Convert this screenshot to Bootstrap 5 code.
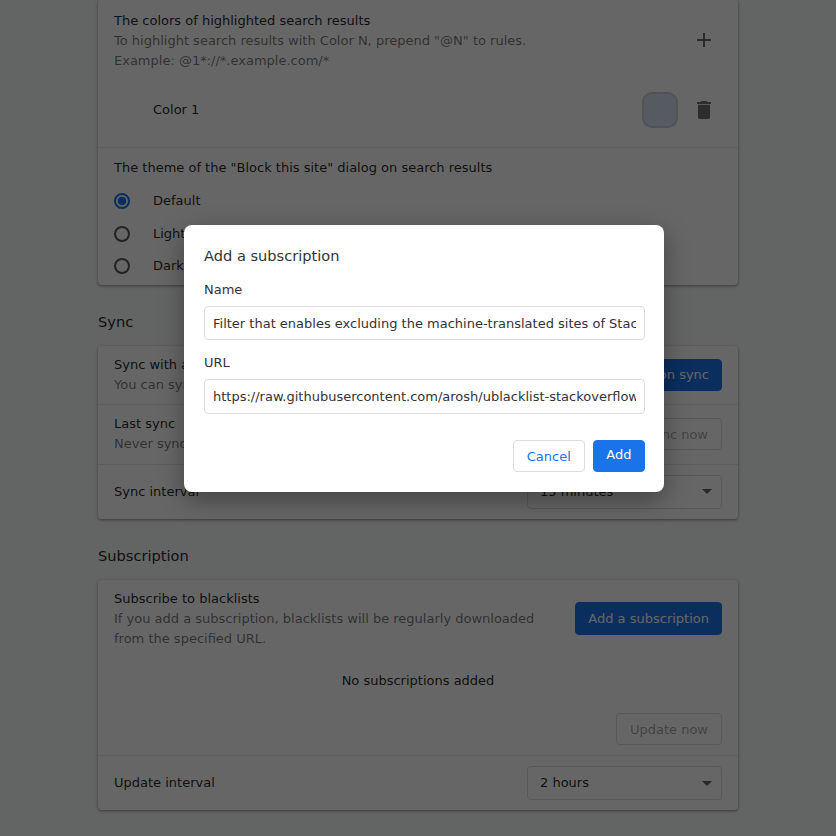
<!DOCTYPE html>
<html lang="en">
<head>
  <meta charset="UTF-8" />
  <meta name="viewport" content="width=device-width, initial-scale=1.0"/>
  <title>uBlacklist Options</title>
  <link href="https://cdn.jsdelivr.net/npm/bootstrap@5.3.0/dist/css/bootstrap.min.css" rel="stylesheet" />
  <style>
    html, body {
      height: 836px;
      overflow: hidden;
    }

    body {
      background-color: #f8f9fa;
      color: rgba(0, 0, 0, 0.87);
      font-family: "DejaVu Sans", sans-serif;
      font-size: 13px;
      line-height: 20px;
    }

    .page-wrap {
      width: 640px;
      margin-left: 98px;
      margin-top: -1px;
    }

    .section-title {
      font-size: 14.6px;
      line-height: 20px;
      margin: 27px 0 14px;
      font-weight: 400;
    }

    .set-card {
      border: 0;
      border-radius: 4px;
      box-shadow: 0 1px 3px rgba(0, 0, 0, 0.45);
      background-color: #fff;
    }

    .set-row {
      padding: 10px 16px;
      border-top: 1px solid #e8e9eb;
    }

    .set-row:first-child {
      border-top: 0;
    }

    .sub-text {
      color: rgba(0, 0, 0, 0.54);
    }

    .btn-main, .btn-line {
      font-size: 13px;
      line-height: 20px;
      border-radius: 4px;
    }

    .btn-main {
      padding: 5px 12px;
      background-color: #1a73e8;
      border: 1px solid #1a73e8;
      color: #fff;
    }

    .btn-line {
      padding: 6px 13px 4px;
      background-color: #fff;
      border: 1px solid #dadce0;
      color: #1a73e8;
    }

    .btn-line:disabled {
      background-color: #fff;
      border-color: #dadce0;
      color: rgba(0, 0, 0, 0.38);
      opacity: 1;
    }

    .btn-main.tall-btn {
      padding-top: 5.5px;
      padding-bottom: 5.5px;
    }

    .btn-main.dialog-add {
      padding: 4px 12.5px 6px;
    }

    .pick-select {
      width: 195px;
      height: 34px;
      font-size: 13px;
      line-height: 20px;
      padding: 6px 12px;
      color: rgba(0, 0, 0, 0.87);
      border-color: #dadce0;
      border-radius: 4px;
      background-size: 10px 5px;
      background-position: right 9px center;
      background-image: url("data:image/svg+xml,%3Csvg xmlns='http://www.w3.org/2000/svg' viewBox='0 0 10 5'%3E%3Cpath d='M0 0h10L5 5z' fill='%23666'/%3E%3C/svg%3E");
    }

    .first-row {
      padding-top: 12px;
      padding-bottom: 0;
    }

    .theme-row {
      padding-bottom: 2px;
    }

    .color-line {
      height: 74px;
      margin-top: 2px;
    }

    .color-name {
      padding-left: 39px;
    }

    .opt-line {
      display: flex;
      align-items: center;
      height: 32.5px;
    }

    .opt-line .form-check-input {
      width: 16px;
      height: 16px;
      margin: 0 23px 0 0;
      border: 2px solid rgba(0, 0, 0, 0.66);
      background-color: transparent;
      background-image: none;
      flex: none;
    }

    .opt-line .form-check-input:checked {
      border-color: #1a73e8;
      background-color: transparent;
      background-image: radial-gradient(circle, #1a73e8 0, #1a73e8 4px, transparent 4.6px);
    }

    .theme-head {
      margin-bottom: 7px;
    }

    .swatch {
      width: 36px;
      height: 36px;
      border-radius: 10px;
      background-color: #d6e3f5;
      border: 2px solid #c8ced6;
      margin-right: 16px;
    }

    .icon-box {
      width: 20px;
      flex: none;
      margin-right: 8px;
      line-height: 0;
    }

    .plus-box {
      margin-bottom: 2px;
    }

    .sync-a {
      height: 58px;
    }

    .sync-b {
      height: 60px;
    }

    .sub-row {
      padding-top: 9px;
    }

    .sub-copy {
      width: 440px;
    }

    .empty-note {
      margin-top: 22px;
      margin-bottom: 22.5px;
    }

    .dim-layer {
      position: absolute;
      inset: 0;
      background-color: rgba(0, 0, 0, 0.6);
      z-index: 10;
    }

    .sub-dialog {
      position: absolute;
      left: 184px;
      top: 225px;
      width: 480px;
      height: 267px;
      z-index: 11;
      padding: 20px 19px 20px 20px;
      border: 0;
      border-radius: 8px;
      background-color: #fff;
      color: #333;
      box-shadow: 0 8px 24px rgba(0, 0, 0, 0.35);
    }

    .dialog-title {
      font-size: 14.6px;
      line-height: 22px;
      font-weight: 400;
      margin: 0 0 13px;
    }

    .field-label {
      display: block;
      line-height: 20px;
      margin: 0 0 6px;
    }

    .field-input {
      height: 34px;
      font-size: 13px;
      line-height: 20px;
      padding: 6px 8px;
      color: #333;
      border-color: #dadce0;
      border-radius: 4px;
    }

    .field-gap {
      margin-bottom: 13px;
    }

    .field-input.tall {
      height: 35px;
    }
  </style>
</head>
<body>
  <div class="page-wrap">
    <div class="card set-card">
      <div class="set-row first-row">
        <div class="d-flex align-items-center justify-content-between">
          <div>
            <div>The colors of highlighted search results</div>
            <div class="sub-text">To highlight search results with Color N, prepend "@N" to rules.</div>
            <div class="sub-text">Example: @1*://*.example.com/*</div>
          </div>
          <div class="icon-box plus-box">
            <svg width="20" height="20" viewBox="0 0 20 20"><path d="M9 3h2v6h6v2h-6v6H9v-6H3V9h6z" fill="#717171"/></svg>
          </div>
        </div>
        <div class="d-flex align-items-center justify-content-between color-line">
          <div class="color-name">Color 1</div>
          <div class="d-flex align-items-center">
            <div class="swatch"></div>
            <div class="icon-box">
              <svg width="20" height="20" viewBox="0 0 20 20"><path d="M7 1h6v1h4v2H3V2h4zM4 4.800h12V17.500a1.500 1.500 0 0 1-1.500 1.500h-9A1.500 1.500 0 0 1 4 17.500z" fill="#717171"/></svg>
            </div>
          </div>
        </div>
      </div>
      <div class="set-row theme-row">
        <div class="theme-head">The theme of the "Block this site" dialog on search results</div>
        <div class="opt-line"><input class="form-check-input" type="radio" name="theme" checked /><span>Default</span></div>
        <div class="opt-line"><input class="form-check-input" type="radio" name="theme" /><span>Light</span></div>
        <div class="opt-line"><input class="form-check-input" type="radio" name="theme" /><span>Dark</span></div>
      </div>
    </div>

    <h2 class="section-title">Sync</h2>
    <div class="card set-card">
      <div class="set-row d-flex align-items-center justify-content-between sync-a">
        <div>
          <div>Sync with a cloud</div>
          <div class="sub-text">You can sync blacklists with a cloud.</div>
        </div>
        <button class="btn btn-main" type="button">Turn on sync</button>
      </div>
      <div class="set-row d-flex align-items-center justify-content-between sync-b">
        <div>
          <div>Last sync</div>
          <div class="sub-text">Never synced</div>
        </div>
        <button class="btn btn-line" type="button" disabled>Sync now</button>
      </div>
      <div class="set-row d-flex align-items-center justify-content-between">
        <div>Sync interval</div>
        <select class="form-select pick-select"><option>15 minutes</option></select>
      </div>
    </div>

    <h2 class="section-title">Subscription</h2>
    <div class="card set-card">
      <div class="set-row sub-row">
        <div class="d-flex align-items-center justify-content-between">
          <div class="sub-copy">
            <div>Subscribe to blacklists</div>
            <div class="sub-text">If you add a subscription, blacklists will be regularly downloaded from the specified URL.</div>
          </div>
          <button class="btn btn-main tall-btn" type="button">Add a subscription</button>
        </div>
        <div class="text-center empty-note">No subscriptions added</div>
        <div class="d-flex justify-content-end">
          <button class="btn btn-line" type="button" disabled>Update now</button>
        </div>
      </div>
      <div class="set-row d-flex align-items-center justify-content-between">
        <div>Update interval</div>
        <select class="form-select pick-select"><option>2 hours</option></select>
      </div>
    </div>
  </div>

  <div class="dim-layer"></div>
  <div class="card sub-dialog">
    <h3 class="dialog-title">Add a subscription</h3>
    <label class="field-label" for="subName">Name</label>
    <input class="form-control field-input field-gap" id="subName" type="text" value="Filter that enables excluding the machine-translated sites of Stack Overflow" />
    <label class="field-label" for="subUrl">URL</label>
    <input class="form-control field-input tall" id="subUrl" type="text" value="https://raw.githubusercontent.com/arosh/ublacklist-stackoverflow-translation/master/uBlacklist.txt" />
    <div class="d-flex justify-content-end gap-2 mt-auto">
      <button class="btn btn-line" type="button">Cancel</button>
      <button class="btn btn-main dialog-add" type="button">Add</button>
    </div>
  </div>

  <script src="https://cdn.jsdelivr.net/npm/bootstrap@5.3.0/dist/js/bootstrap.bundle.min.js"></script>
</body>
</html>
